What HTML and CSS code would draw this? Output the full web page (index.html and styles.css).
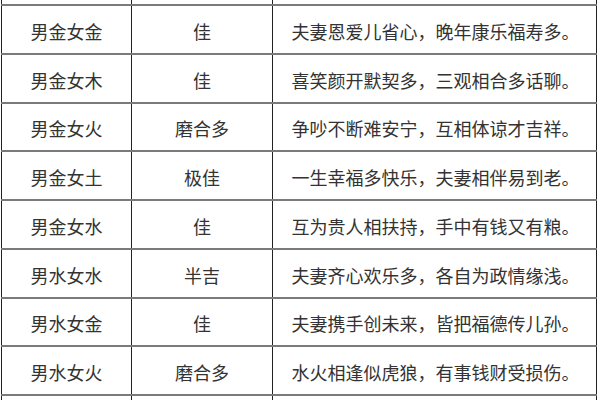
FILE: index.html
```html
<!DOCTYPE html>
<html lang="zh">
<head>
<meta charset="utf-8">
<link rel="stylesheet" href="styles.css">
</head>
<body>
<div class="table">
  <div class="row stub"><div class="c1"></div><div class="c2"></div><div class="c3"></div></div>
  <div class="row"><div class="c1">男金女金</div><div class="c2">佳</div><div class="c3">夫妻恩爱儿省心，晚年康乐福寿多。</div></div>
  <div class="row"><div class="c1">男金女木</div><div class="c2">佳</div><div class="c3">喜笑颜开默契多，三观相合多话聊。</div></div>
  <div class="row"><div class="c1">男金女火</div><div class="c2">磨合多</div><div class="c3">争吵不断难安宁，互相体谅才吉祥。</div></div>
  <div class="row"><div class="c1">男金女土</div><div class="c2">极佳</div><div class="c3">一生幸福多快乐，夫妻相伴易到老。</div></div>
  <div class="row"><div class="c1">男金女水</div><div class="c2">佳</div><div class="c3">互为贵人相扶持，手中有钱又有粮。</div></div>
  <div class="row"><div class="c1">男水女水</div><div class="c2">半吉</div><div class="c3">夫妻齐心欢乐多，各自为政情缘浅。</div></div>
  <div class="row"><div class="c1">男水女金</div><div class="c2">佳</div><div class="c3">夫妻携手创未来，皆把福德传儿孙。</div></div>
  <div class="row"><div class="c1">男水女火</div><div class="c2">磨合多</div><div class="c3">水火相逢似虎狼，有事钱财受损伤。</div></div>
  <div class="row"><div class="c1"></div><div class="c2"></div><div class="c3"></div></div>
</div>
</body>
</html>
```
FILE: styles.css
```css
html, body {
  margin: 0;
  padding: 0;
  background: #ffffff;
  overflow: hidden;
}
.table {
  margin-left: 1px;
  width: 596px;
  font-family: "Noto Sans CJK SC", "Microsoft YaHei", sans-serif;
  font-size: 18px;
  color: #333333;
}
.row {
  display: grid;
  grid-template-columns: 130px 141px 325px;
  height: 48.75px;
  box-sizing: border-box;
  border-bottom: 2px solid #7a7a7a;
}
.row.stub {
  height: 6px;
}
.row > div {
  border-left: 1px solid #222222;
  display: flex;
  align-items: center;
  justify-content: center;
  padding-top: 3px;
  box-sizing: border-box;
  white-space: nowrap;
}
.row > .c3 {
  border-right: 1px solid #222222;
  padding-left: 2px;
}
.stub > div {
  padding-top: 0;
}
```
